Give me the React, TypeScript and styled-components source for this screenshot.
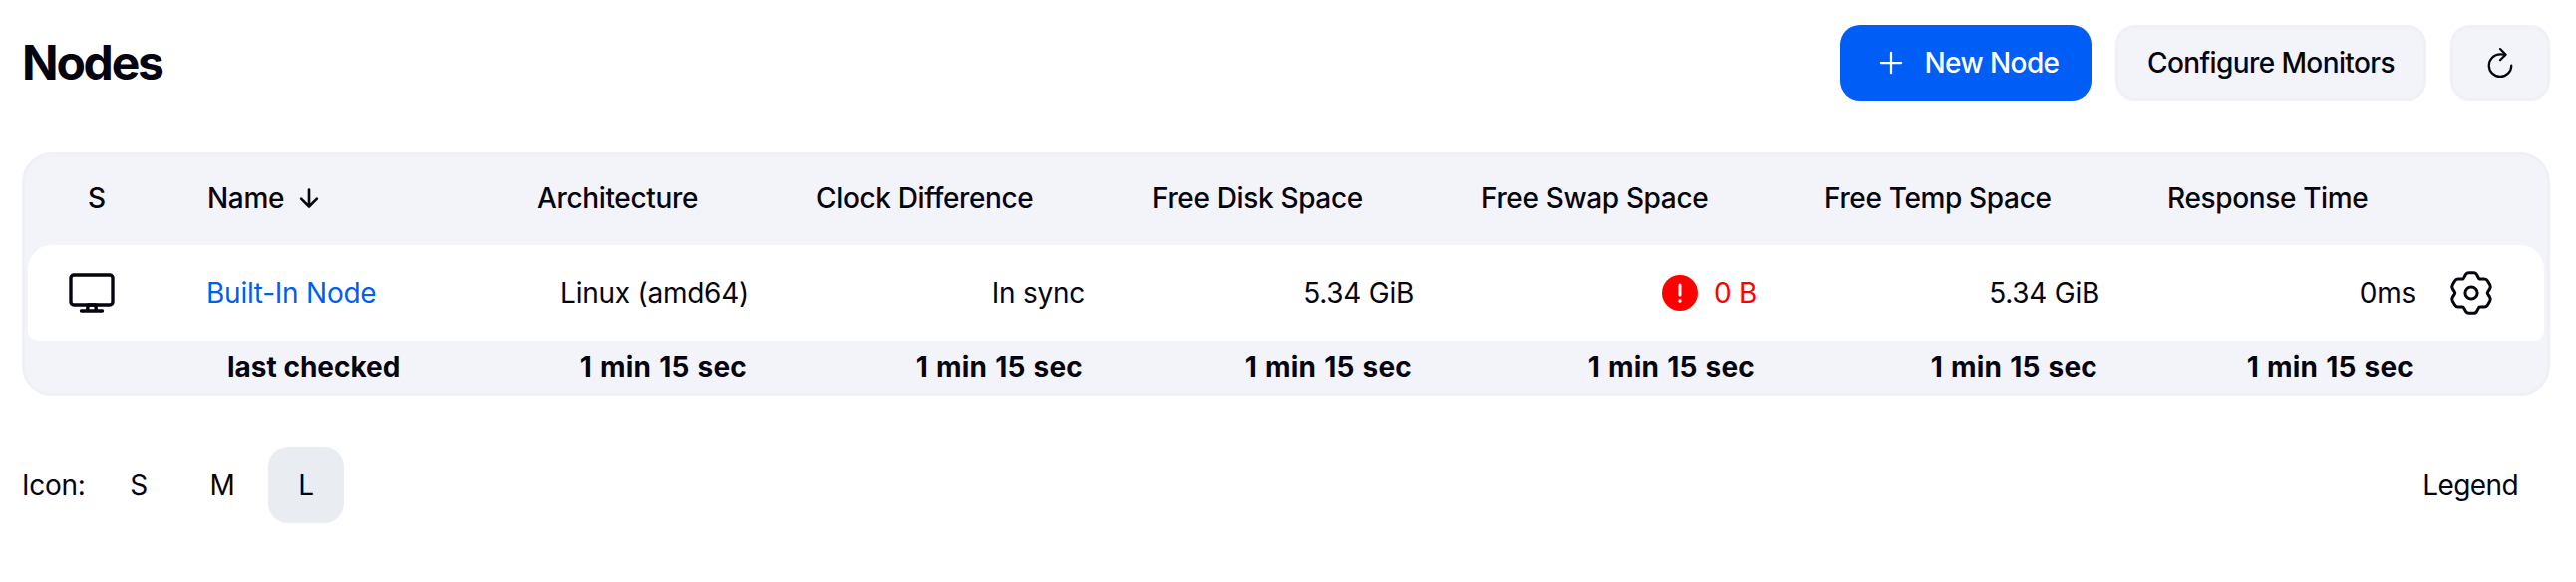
import React from "react";
import styled, { createGlobalStyle } from "styled-components";

const Global = createGlobalStyle`
  * { box-sizing: border-box; }
  body { margin: 0; background: #fff; color: #06040f; font: 400 28px/40px Inter, sans-serif; letter-spacing: -0.25px; }
  button { font: inherit; color: inherit; letter-spacing: inherit; border: 0; background: none; padding: 0; }
`;

const columns = "146px 331px 280px 337px 330px 344px 344px 317px 95px";

const Page = styled.main`
  padding: 25px 26px 0 22px;
`;
const Header = styled.header`
  display: flex;
  align-items: center;
  gap: 24px;
  height: 76px;
`;
const Title = styled.h1`
  flex: 1;
  margin: 0;
  font-size: 48px;
  line-height: 76px;
  font-weight: 700;
  letter-spacing: -2.2px;
`;
const Button = styled.button<{ $primary?: boolean; $width: number }>`
  display: flex;
  align-items: center;
  justify-content: center;
  gap: 16px;
  width: ${(p) => p.$width}px;
  height: 76px;
  border-radius: 20px;
  font-weight: 450;
  letter-spacing: -0.6px;
  white-space: nowrap;
  color: ${(p) => (p.$primary ? "#fff" : "#06040f")};
  background: ${(p) => (p.$primary ? "#005df5" : "#f3f4f9")};
  box-shadow: ${(p) => (p.$primary ? "none" : "inset 0 0 0 3px #eff1f6")};
`;
const Table = styled.section`
  margin-top: 52px;
  height: 244px;
  border: 3px solid #eff1f6;
  border-radius: 30px;
  padding: 0 3px;
  background: #f3f4f9;
`;
const HeadRow = styled.div`
  display: grid;
  grid-template-columns: ${columns};
  align-items: center;
  height: 90px;
  padding-bottom: 4px;
  font-weight: 450;
  letter-spacing: -0.35px;
`;
const HeadCell = styled.div<{ $center?: boolean }>`
  display: flex;
  align-items: center;
  gap: 11px;
  padding-left: ${(p) => (p.$center ? 60 : 34)}px;
  white-space: nowrap;
`;
const BodyRow = styled.div`
  display: grid;
  grid-template-columns: ${columns};
  align-items: center;
  height: 96px;
  border-radius: 24px 24px 10px 10px;
  background: #fff;
`;
const Cell = styled.div<{ $danger?: boolean }>`
  display: flex;
  align-items: center;
  justify-content: flex-end;
  gap: 16px;
  padding-right: 34px;
  white-space: nowrap;
  color: ${(p) => (p.$danger ? "#f00" : "inherit")};
`;
const IconCell = styled.div<{ $inset: number }>`
  display: flex;
  margin-left: ${(p) => p.$inset}px;
`;
const NodeLink = styled.a`
  padding-left: 33px;
  color: #005df5;
`;
const FootRow = styled.div`
  display: grid;
  grid-template-columns: ${columns};
  align-items: center;
  height: 52px;
  font-weight: 700;
  letter-spacing: 0;
`;
const FootLabel = styled.div`
  padding-left: 54px;
`;
const FootCell = styled.div`
  padding-right: 36px;
  text-align: right;
  white-space: nowrap;
  letter-spacing: 0.2px;
  word-spacing: 1.2px;
`;
const Footer = styled.footer`
  display: flex;
  align-items: center;
  gap: 8px;
  height: 76px;
  margin-top: 52px;
`;
const Label = styled.span`
  width: 71px;
`;
const Size = styled.button<{ $active?: boolean }>`
  width: 76px;
  height: 76px;
  border-radius: 20px;
  background: ${(p) => (p.$active ? "#e9edf2" : "transparent")};
`;
const Legend = styled.button`
  margin-left: auto;
  margin-right: 32px;
  letter-spacing: -0.6px;
`;
const Icon = styled.svg`
  display: block;
  flex: none;
  fill: none;
  stroke: currentColor;
  stroke-linecap: round;
  stroke-linejoin: round;
`;

const PlusIcon = () => (
  <Icon width="36" height="36" viewBox="0 0 512 512" strokeWidth="32">
    <path d="M256 112v288M400 256H112" />
  </Icon>
);
const RefreshIcon = () => (
  <Icon width="36" height="36" viewBox="0 0 512 512" strokeWidth="32">
    <path d="M320 146s24.36-12-64-12a160 160 0 10160 160" />
    <path d="M256 58l80 80-80 80" />
  </Icon>
);
const SortIcon = () => (
  <Icon width="28" height="28" viewBox="0 0 512 512" strokeWidth="48">
    <path d="M112 268l144 144 144-144M256 392V100" />
  </Icon>
);
const ComputerIcon = () => (
  <Icon width="48" height="48" viewBox="0 0 512 512" strokeWidth="36">
    <rect x="32" y="64" width="448" height="320" rx="32" />
    <path d="M304 448l-8-64h-80l-8 64zM368 448H144" />
  </Icon>
);
const AlertIcon = () => (
  <Icon width="36" height="36" viewBox="0 0 36 36" strokeWidth="3">
    <circle cx="18" cy="18" r="18" fill="#f00" stroke="none" />
    <path d="M18 10v10" stroke="#fff" />
    <circle cx="18" cy="26" r="1.7" fill="#fff" stroke="none" />
  </Icon>
);

type Point = [number, number];

// Six-toothed cog outline with every corner softened by a short curve.
const gearPath = (() => {
  const tooth: Point[] = [[-7.8, -14.2], [-4.6, -20.3], [4.6, -20.3], [7.8, -14.2]];
  const pts: Point[] = [];
  for (let i = 0; i < 6; i++) {
    const a = (i * Math.PI) / 3;
    tooth.forEach(([x, y]) => {
      pts.push([x * Math.cos(a) - y * Math.sin(a), x * Math.sin(a) + y * Math.cos(a)]);
    });
  }
  const toward = (from: Point, to: Point): string => {
    const len = Math.hypot(to[0] - from[0], to[1] - from[1]);
    const t = Math.min(2.4, len / 2) / (len || 1);
    return `${(from[0] + (to[0] - from[0]) * t).toFixed(2)} ${(from[1] + (to[1] - from[1]) * t).toFixed(2)}`;
  };
  const n = pts.length;
  return (
    pts
      .map((p, i) => {
        const start = toward(p, pts[(i + n - 1) % n]);
        const end = toward(p, pts[(i + 1) % n]);
        return `${i ? "L" : "M"}${start}Q${p[0].toFixed(2)} ${p[1].toFixed(2)} ${end}`;
      })
      .join("") + "Z"
  );
})();
const GearIcon = () => (
  <Icon width="48" height="48" viewBox="-24 -24 48 48" strokeWidth="3">
    <path d={gearPath} />
    <circle r="6.1" />
  </Icon>
);

const metrics = [
  { name: "Architecture", value: "Linux (amd64)" },
  { name: "Clock Difference", value: "In sync" },
  { name: "Free Disk Space", value: "5.34 GiB" },
  { name: "Free Swap Space", value: "0 B", danger: true },
  { name: "Free Temp Space", value: "5.34 GiB" },
  { name: "Response Time", value: "0ms" },
];

export default function App() {
  return (
    <Page>
      <Global />
      <Header>
        <Title>Nodes</Title>
        <Button $primary $width={252}><PlusIcon />New Node</Button>
        <Button $width={312}>Configure Monitors</Button>
        <Button $width={100} aria-label="Refresh"><RefreshIcon /></Button>
      </Header>
      <Table>
        <HeadRow>
          <HeadCell $center>S</HeadCell>
          <HeadCell>Name<SortIcon /></HeadCell>
          {metrics.map((m) => <HeadCell key={m.name}>{m.name}</HeadCell>)}
        </HeadRow>
        <BodyRow>
          <IconCell $inset={40}><ComputerIcon /></IconCell>
          <NodeLink>Built-In Node</NodeLink>
          {metrics.map((m) => (
            <Cell key={m.name} $danger={m.danger}>{m.danger && <AlertIcon />}{m.value}</Cell>
          ))}
          <IconCell $inset={-2}><GearIcon /></IconCell>
        </BodyRow>
        <FootRow>
          <span />
          <FootLabel>last checked</FootLabel>
          {metrics.map((m) => <FootCell key={m.name}>1 min 15 sec</FootCell>)}
        </FootRow>
      </Table>
      <Footer>
        <Label>Icon:</Label>
        <Size>S</Size>
        <Size>M</Size>
        <Size $active>L</Size>
        <Legend>Legend</Legend>
      </Footer>
    </Page>
  );
}
